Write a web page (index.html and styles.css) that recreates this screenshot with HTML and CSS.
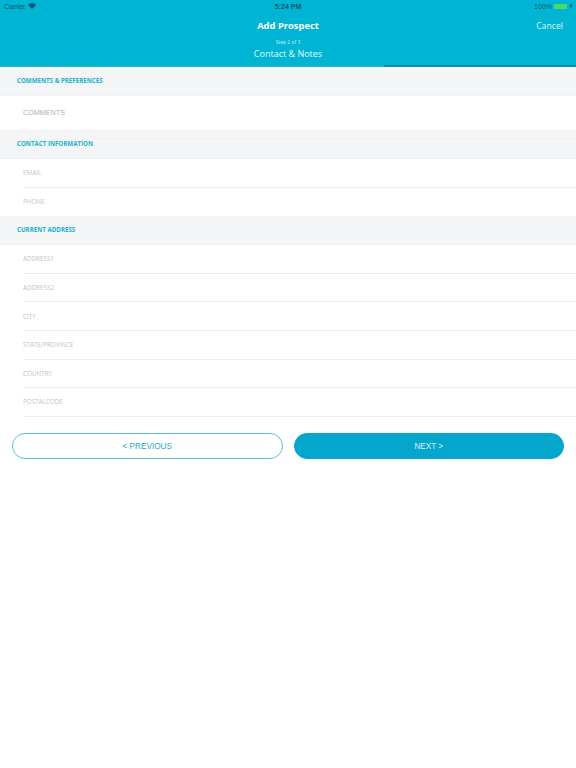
FILE: index.html
```html
<!DOCTYPE html>
<html lang="en">
<head>
<meta charset="utf-8">
<title>Add Prospect</title>
<link rel="stylesheet" href="styles.css">
</head>
<body>
<header class="header">
  <div class="status">
    <div class="status-left">
      <span>Carrier</span>
      <svg class="wifi" viewBox="0 0 12 9" width="8" height="6"><path d="M6 9 0 2.8C3.4-.6 8.600-.6 12 2.800Z" fill="#0f5468"/></svg>
    </div>
    <div class="status-time">5:24 PM</div>
    <div class="status-right">
      <span>100%</span>
      <span class="battery"></span>
      <svg class="bolt" viewBox="0 0 6 8" width="4" height="6"><path d="M3.500 0 .5 4.500h2L2 8l3.500-5h-2Z" fill="#0f5468"/></svg>
    </div>
  </div>
  <div class="nav">
    <div class="nav-title">Add Prospect</div>
    <div class="nav-cancel">Cancel</div>
  </div>
  <div class="step">
    <div class="step-count">Step 2 of 3</div>
    <div class="step-name">Contact &amp; Notes</div>
  </div>
  <div class="progress"><div class="progress-fill"></div></div>
</header>
<main>
  <h2 class="section">COMMENTS &amp; PREFERENCES</h2>
  <div class="row row-comments">COMMENTS</div>
  <h2 class="section sec-b">CONTACT INFORMATION</h2>
  <div class="row">EMAIL</div>
  <div class="row last">PHONE</div>
  <h2 class="section">CURRENT ADDRESS</h2>
  <div class="row">ADDRESS1</div>
  <div class="row">ADDRESS2</div>
  <div class="row">CITY</div>
  <div class="row">STATE/PROVINCE</div>
  <div class="row">COUNTRY</div>
  <div class="row">POSTALCODE</div>
  <div class="buttons">
    <button class="btn btn-prev">&lt; PREVIOUS</button>
    <button class="btn btn-next">NEXT &gt;</button>
  </div>
</main>
</body>
</html>
```

FILE: styles.css
```css
* { box-sizing: border-box; }
html, body { margin: 0; padding: 0; }
body {
  width: 576px;
  height: 768px;
  background: #fff;
  font-family: "Open Sans", "Liberation Sans", sans-serif;
  overflow: hidden;
}
.header {
  height: 67px;
  background: #00b4d3;
  display: flex;
  flex-direction: column;
  color: #fff;
}
.status {
  height: 12px;
  display: flex;
  justify-content: space-between;
  align-items: center;
  position: relative;
  padding: 0 3px 0 4px;
  font-family: "Liberation Sans", sans-serif;
  font-size: 7px;
  color: #0f5468;
}
.status-left, .status-right { display: flex; align-items: center; gap: 3px; }
.status-time {
  position: absolute;
  left: 0;
  right: 0;
  text-align: center;
  font-weight: 700;
}
.status-right { gap: 2px; }
.battery {
  width: 13px;
  height: 5px;
  background: #4cd964;
}
.nav {
  height: 22px;
  margin-top: 2px;
  display: flex;
  align-items: center;
  justify-content: center;
  position: relative;
}
.nav-title { font-size: 9.400px; font-weight: 700; }
.nav-cancel {
  position: absolute;
  right: 13px;
  top: 6px;
  font-size: 8.700px;
  color: #d6f6fb;
}
.step {
  margin-top: 3px;
  text-align: center;
  flex: 1;
}
.step-count { font-size: 5px; line-height: 7px; color: #cdf2f8; }
.step-name { font-size: 9px; line-height: 13px; color: #e4fafd; margin-top: 1px; }
.progress { height: 2px; background: #1fb1c9; }
.progress-fill { width: 192px; height: 2px; margin-left: 384px; background: #0b8ca3; }
.section {
  margin: 0;
  height: 29px;
  display: flex;
  align-items: center;
  padding: 0 0 1px 17px;
  background: #f4f5f6;
  color: #1cb2d0;
  font-size: 6.200px;
  font-weight: 700;
  border-bottom: 1px solid #f0f1f2;
}
.sec-b { position: relative; }
.sec-b::after {
  content: "";
  position: absolute;
  left: 95px;
  right: 0;
  top: 11px;
  height: 1px;
  background: #fbfbfc;
}
.row {
  height: 28.600px;
  margin-left: 23px;
  display: flex;
  align-items: center;
  font-size: 6.300px;
  color: #c4c4c4;
  border-bottom: 1px solid #eeeeee;
}
.row.last { border-bottom: 0; }
.row-comments {
  margin-left: 0;
  padding: 0 0 1px 23px;
  height: 34px;
  font-family: "Liberation Sans", sans-serif;
  font-size: 7.200px;
  color: #b2b2b2;
  border-bottom: 0;
}
.buttons {
  display: flex;
  gap: 11px;
  padding: 16px 12px 0;
}
.btn {
  flex: 1;
  height: 26px;
  border-radius: 13px;
  font-family: "Liberation Sans", sans-serif;
  font-size: 8.200px;
  padding: 2px 0 0;
}
.btn-prev { background: #fff; border: 1px solid #62bfd6; color: #1fa8c8; }
.btn-next { background: #05a6cd; border: 1px solid #05a6cd; color: #d6f8fc; }
```
